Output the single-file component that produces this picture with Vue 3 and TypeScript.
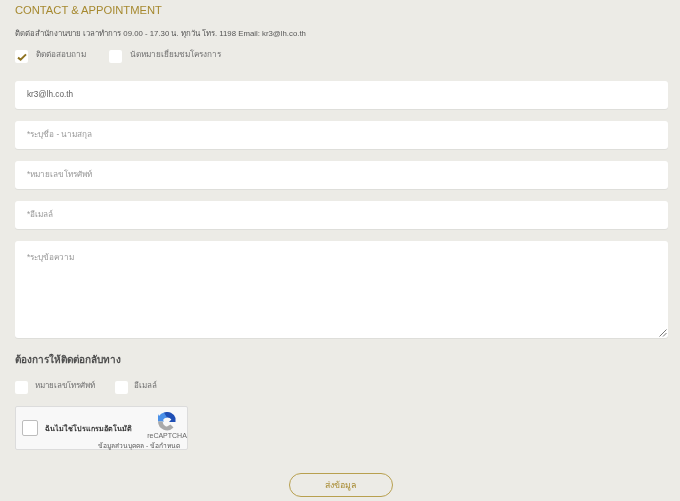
<script setup lang="ts">
const fields = [
  { text: 'kr3@lh.co.th', value: true },
  { text: '*ระบุชื่อ - นามสกุล', value: false },
  { text: '*หมายเลขโทรศัพท์', value: false },
  { text: '*อีเมลล์', value: false },
]
</script>

<template>
  <main class="page">
    <h1 class="title">CONTACT &amp; APPOINTMENT</h1>
    <p class="info">ติดต่อสำนักงานขาย เวลาทำการ 09.00 - 17.30 น. ทุกวัน โทร. 1198 Email: kr3@lh.co.th</p>
    <div class="checks top">
      <label class="check first">
        <span class="box">
          <svg width="10" height="8" viewBox="0 0 10 8"><path d="M1 4.6 L3.6 6.6 L9 1.4" fill="none" stroke="#8f7320" stroke-width="2" /></svg>
        </span>
        <span>ติดต่อสอบถาม</span>
      </label>
      <label class="check">
        <span class="box"></span>
        <span>นัดหมายเยี่ยมชมโครงการ</span>
      </label>
    </div>
    <div class="fields">
      <div v-for="f in fields" :key="f.text" class="field" :class="{ filled: f.value }">{{ f.text }}</div>
      <div class="field area">
        *ระบุข้อความ
        <svg class="grip" width="8" height="8" viewBox="0 0 8 8"><path d="M0.5 7.5 L7.5 0.5 M4 7.5 L7.5 4" stroke="#777" stroke-width="1" fill="none" /></svg>
      </div>
    </div>
    <h2 class="sub">ต้องการให้ติดต่อกลับทาง</h2>
    <div class="checks back">
      <label class="check second"><span class="box"></span><span>หมายเลขโทรศัพท์</span></label>
      <label class="check third"><span class="box"></span><span>อีเมลล์</span></label>
    </div>
    <div class="captcha">
      <span class="cbox"></span>
      <span class="robot">ฉันไม่ใช่โปรแกรมอัตโนมัติ</span>
      <div class="brand">
        <svg width="18" height="19" viewBox="0 0 18 19">
          <path d="M6 0.5 A9 9 0 0 1 17.5 6 L17.5 10 L11 10 L13.4 7.6 A5 5 0 0 0 9 5.5 L5 5 Z" fill="#1f4fb5" />
          <path d="M6 0.5 A9 9 0 0 0 1 4 L0 2 L0 9.5 L6 9.5 L5 8 A4.5 4.5 0 0 1 9 5.5 Z" fill="#4a90e8" />
          <path d="M0 9.5 A9 9 0 0 0 15.5 15.5 L12.5 12.5 L9 14.5 L8 14.4 A5 5 0 0 1 4.8 9.5 Z" fill="#a9a9a9" />
        </svg>
        <span class="rc">reCAPTCHA</span>
      </div>
      <span class="terms">ข้อมูลส่วนบุคคล - ข้อกำหนด</span>
    </div>
    <div class="actions"><button class="send" type="button">ส่งข้อมูล</button></div>
  </main>
</template>

<style>
html, body { margin: 0; background: #ecebe6; }
</style>

<style scoped>
.page {
  width: 680px;
  height: 501px;
  box-sizing: border-box;
  padding: 3px 12px 0 15px;
  overflow: hidden;
  background: #ecebe6;
  font-family: "Liberation Sans", "Noto Sans", sans-serif;
  color: #555;
  filter: blur(0.4px);
}
.title {
  margin: 0;
  height: 14px;
  font-size: 11.2px;
  line-height: 14px;
  font-weight: 400;
  color: #a6892f;
}
.info {
  margin: 10px 0 0;
  height: 13px;
  line-height: 13px;
  font-size: 7.8px;
  color: #555;
}
.checks { display: flex; align-items: flex-start; color: #6e6e6e; }
.top { margin-top: 10px; height: 31px; font-size: 8.2px; }
.check { display: flex; align-items: flex-start; gap: 8px; line-height: 10px; }
.first { margin-right: 23px; }
.second { margin-right: 20px; gap: 7px; }
.third { gap: 6px; }
.box {
  width: 13px;
  height: 13px;
  border-radius: 2px;
  background: #fff;
  display: flex;
  align-items: center;
  justify-content: center;
}
.fields { display: flex; flex-direction: column; gap: 12px; }
.field {
  height: 28px;
  line-height: 28px;
  padding-left: 12px;
  border-radius: 3px;
  background: #fff;
  box-shadow: 0 1px 0 #dededa;
  font-size: 8.2px;
  color: #979797;
}
.filled { color: #5e5e5e; }
.area { height: 97px; line-height: 33px; position: relative; }
.grip { position: absolute; right: 1px; bottom: 1px; }
.sub {
  margin: 15px 0 0;
  height: 14px;
  line-height: 14px;
  font-size: 10px;
  font-weight: 700;
  color: #4e4e4e;
}
.back { margin-top: 14px; height: 25px; font-size: 8px; }
.captcha {
  width: 173px;
  height: 44px;
  position: relative;
  box-sizing: border-box;
  display: flex;
  align-items: center;
  padding-left: 6px;
  background: #f8f8f8;
  border: 1px solid #dcdcdc;
  border-radius: 2px;
}
.cbox {
  width: 16px;
  height: 16px;
  box-sizing: border-box;
  background: #fff;
  border: 1px solid #bcbcbc;
  border-radius: 2px;
}
.robot { margin-left: 7px; font-size: 7.2px; font-weight: 700; color: #333; }
.brand {
  position: absolute;
  right: 0;
  top: 5px;
  display: flex;
  flex-direction: column;
  align-items: center;
  width: 40px;
}
.rc { margin-top: 1px; font-size: 7px; line-height: 8px; color: #666; }
.terms {
  position: absolute;
  right: 7px;
  bottom: -1px;
  font-size: 6.6px;
  line-height: 8px;
  color: #555;
}
.actions { margin-top: 23px; display: flex; justify-content: center; padding-right: 2px; }
.send {
  width: 104px;
  height: 24px;
  padding: 0;
  border: 1.3px solid #b8a04f;
  border-radius: 12px;
  background: transparent;
  font-family: inherit;
  font-size: 8.8px;
  color: #a6892f;
}
</style>
